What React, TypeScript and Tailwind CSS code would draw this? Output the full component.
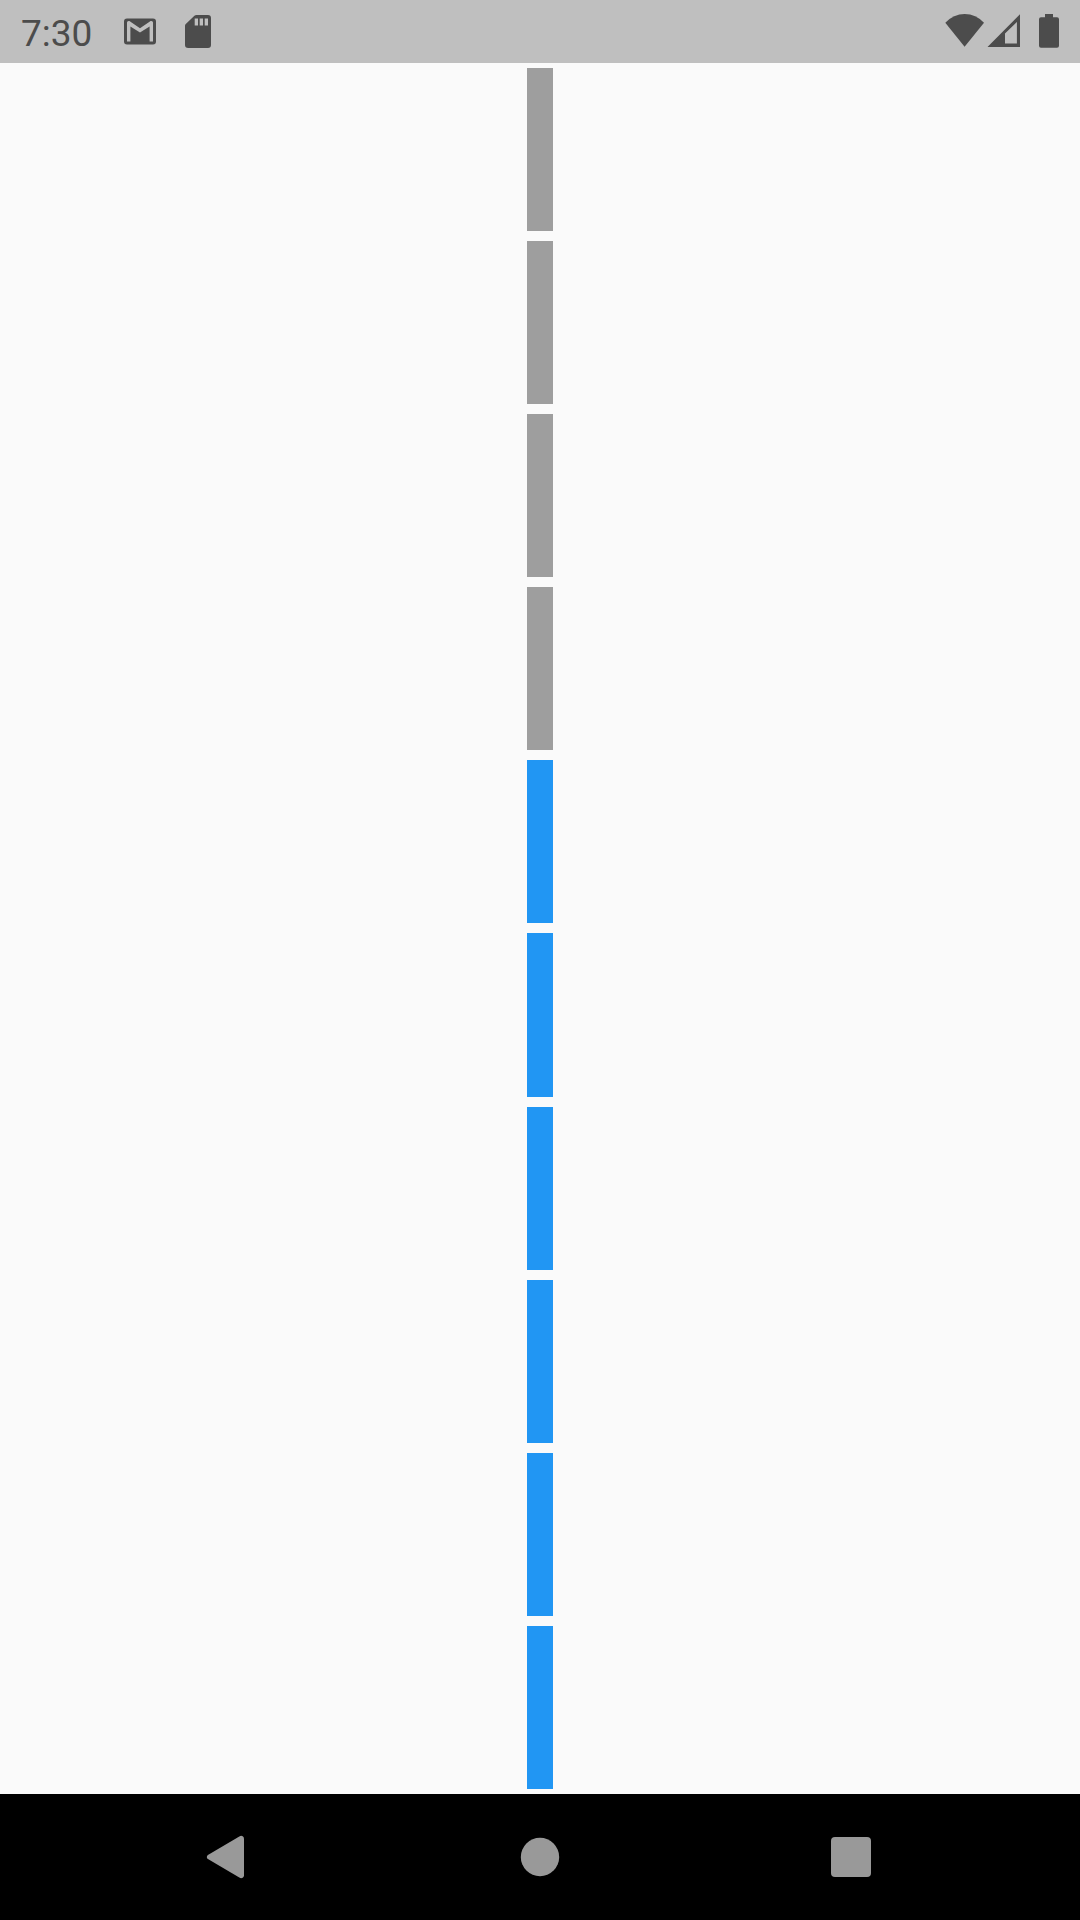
import React from "react";

const TOTAL_SEGMENTS = 10;
const EMPTY_SEGMENTS = 4;

function StatusBar() {
  return (
    <header className="flex h-[63px] shrink-0 items-center justify-between bg-[#bfbfbf] px-[21px] pb-px text-[#4c4c4c]">
      <div className="flex items-center">
        <time className="pt-1 text-[37px] leading-none">7:30</time>
        <svg className="ml-8 h-[34px] w-8" viewBox="0 0 32 34" role="img" aria-label="Gmail">
          <rect x="0" y="4.400" width="32" height="26.200" rx="3" fill="currentColor" />
          <path
            d="M3 27.500V8.500q0-1.600 1.600-1.600h.8L16 14.200l10.600-7.300h.8Q29 6.900 29 8.500V27.500H25.600V12.500L16 18.600L6.400 12.500V27.500Z"
            fill="#bfbfbf"
          />
        </svg>
        <svg className="ml-[29px] h-[34px] w-[26px]" viewBox="0 0 26 34" role="img" aria-label="SD card">
          <path
            fillRule="evenodd"
            d="M11.500 1H23q3 0 3 3V31q0 3-3 3H3.200Q0 34 0 31V11.700Q0 10.700.8 9.900L9.400 1.700Q10.200 1 11.500 1ZM9.700 4.500V11.500H13V4.500ZM14.700 4.500V11.500H18V4.500ZM19.700 4.500V11.500H23V4.500Z"
            fill="currentColor"
          />
        </svg>
      </div>
      <div className="flex items-center">
        <svg className="h-[34px] w-10" viewBox="0 0 40 34" role="img" aria-label="Wi-Fi">
          <path d="M.3 8.800Q8.500 0 19.700 0T39 8.800L19.600 32.800Z" fill="currentColor" />
        </svg>
        <svg className="ml-0.5 h-[34px] w-[33px]" viewBox="0 0 33 34" role="img" aria-label="Mobile signal">
          <path fillRule="evenodd" d="M.5 33L33 .3V33ZM18 19.500V29.600H29.900V8Z" fill="currentColor" />
        </svg>
        <svg className="ml-[19px] h-[34px] w-5" viewBox="0 0 20 34" role="img" aria-label="Battery">
          <path
            d="M6 0H14V3.300H18Q20 3.300 20 5.300V31.700Q20 33.700 18 33.700H2Q0 33.700 0 31.700V5.300Q0 3.300 2 3.300H6Z"
            fill="currentColor"
          />
        </svg>
      </div>
    </header>
  );
}

function SegmentedLevel() {
  return (
    <main
      className="flex flex-1 flex-col items-center"
      role="meter"
      aria-label="Level"
      aria-valuemin={0}
      aria-valuemax={TOTAL_SEGMENTS}
      aria-valuenow={TOTAL_SEGMENTS - EMPTY_SEGMENTS}
    >
      {Array.from({ length: TOTAL_SEGMENTS }, (_, i) => (
        <div key={i} className="flex flex-1 py-[5px]">
          <div className={i < EMPTY_SEGMENTS ? "w-[26px] bg-[#9e9e9e]" : "w-[26px] bg-[#2196f3]"} />
        </div>
      ))}
    </main>
  );
}

function NavigationBar() {
  return (
    <nav className="grid h-[126px] shrink-0 grid-cols-3 bg-black px-[73px] text-[#999999]">
      <button type="button" aria-label="Back" className="flex items-center justify-center">
        <svg className="size-[60px]" viewBox="0 0 60 60">
          <path
            d="M8.900 27.900L40.300 9.400Q42.200 8.400 43.700 9.200Q45 10 45 11.700V48.300Q45 50 43.700 50.800Q42.200 51.600 40.300 50.600L8.900 32.100Q7.800 31.300 7.800 30T8.900 27.900Z"
            fill="currentColor"
          />
        </svg>
      </button>
      <button type="button" aria-label="Home" className="flex items-center justify-center">
        <svg className="size-[60px]" viewBox="0 0 60 60">
          <circle cx="30" cy="30" r="19.200" fill="currentColor" />
        </svg>
      </button>
      <button type="button" aria-label="Overview" className="flex items-center justify-center">
        <svg className="size-[60px]" viewBox="0 0 60 60">
          <rect x="10" y="10" width="40" height="40" rx="4" fill="currentColor" />
        </svg>
      </button>
    </nav>
  );
}

export default function App() {
  return (
    <div className="flex min-h-screen flex-col bg-[#fafafa] font-[Roboto,sans-serif]">
      <StatusBar />
      <SegmentedLevel />
      <NavigationBar />
    </div>
  );
}
